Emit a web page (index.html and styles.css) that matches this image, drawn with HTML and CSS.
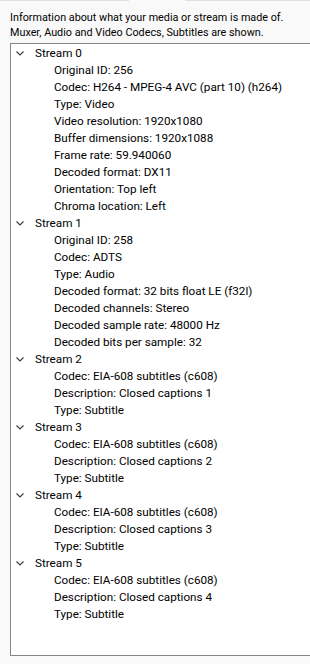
FILE: index.html
```html
<!DOCTYPE html>
<html lang="en">
<head>
    <meta charset="UTF-8">
    <title>Codec information</title>
    <link rel="stylesheet" href="styles.css">
</head>
<body>
    <div class="tabs-line">
        <div class="tabs-line__part tabs-line__part_left"></div>
        <div class="tabs-line__gap"></div>
        <div class="tabs-line__part"></div>
    </div>

    <p class="hint">Information about what your media or stream is made of.<br>Muxer, Audio and Video Codecs, Subtitles are shown.</p>

    <div class="tree">
        <div class="tree__node">
            <div class="tree__head"><svg class="tree__arrow" width="8" height="5" viewBox="0 0 8 5"><polyline points="0.5,0.5 4,4 7.5,0.5"/></svg>Stream 0</div>
            <div class="tree__item">Original ID: 256</div>
            <div class="tree__item">Codec: H264 - MPEG-4 AVC (part 10) (h264)</div>
            <div class="tree__item">Type: Video</div>
            <div class="tree__item">Video resolution: 1920x1080</div>
            <div class="tree__item">Buffer dimensions: 1920x1088</div>
            <div class="tree__item">Frame rate: 59.940060</div>
            <div class="tree__item">Decoded format: DX11</div>
            <div class="tree__item">Orientation: Top left</div>
            <div class="tree__item">Chroma location: Left</div>
        </div>
        <div class="tree__node">
            <div class="tree__head"><svg class="tree__arrow" width="8" height="5" viewBox="0 0 8 5"><polyline points="0.5,0.5 4,4 7.5,0.5"/></svg>Stream 1</div>
            <div class="tree__item">Original ID: 258</div>
            <div class="tree__item">Codec: ADTS</div>
            <div class="tree__item">Type: Audio</div>
            <div class="tree__item">Decoded format: 32 bits float LE (f32l)</div>
            <div class="tree__item">Decoded channels: Stereo</div>
            <div class="tree__item">Decoded sample rate: 48000 Hz</div>
            <div class="tree__item">Decoded bits per sample: 32</div>
        </div>
        <div class="tree__node">
            <div class="tree__head"><svg class="tree__arrow" width="8" height="5" viewBox="0 0 8 5"><polyline points="0.5,0.5 4,4 7.5,0.5"/></svg>Stream 2</div>
            <div class="tree__item">Codec: EIA-608 subtitles (c608)</div>
            <div class="tree__item">Description: Closed captions 1</div>
            <div class="tree__item">Type: Subtitle</div>
        </div>
        <div class="tree__node">
            <div class="tree__head"><svg class="tree__arrow" width="8" height="5" viewBox="0 0 8 5"><polyline points="0.5,0.5 4,4 7.5,0.5"/></svg>Stream 3</div>
            <div class="tree__item">Codec: EIA-608 subtitles (c608)</div>
            <div class="tree__item">Description: Closed captions 2</div>
            <div class="tree__item">Type: Subtitle</div>
        </div>
        <div class="tree__node">
            <div class="tree__head"><svg class="tree__arrow" width="8" height="5" viewBox="0 0 8 5"><polyline points="0.5,0.5 4,4 7.5,0.5"/></svg>Stream 4</div>
            <div class="tree__item">Codec: EIA-608 subtitles (c608)</div>
            <div class="tree__item">Description: Closed captions 3</div>
            <div class="tree__item">Type: Subtitle</div>
        </div>
        <div class="tree__node">
            <div class="tree__head"><svg class="tree__arrow" width="8" height="5" viewBox="0 0 8 5"><polyline points="0.5,0.5 4,4 7.5,0.5"/></svg>Stream 5</div>
            <div class="tree__item">Codec: EIA-608 subtitles (c608)</div>
            <div class="tree__item">Description: Closed captions 4</div>
            <div class="tree__item">Type: Subtitle</div>
        </div>
    </div>
</body>
</html>
```

FILE: styles.css
```css
html, body {
    margin: 0;
    height: 100%;
    overflow: hidden;
}
body {
    background-color: #f9f9f9;
    font-family: Roboto, sans-serif;
    color: #000;
}
.tabs-line {
    display: flex;
    height: 1px;
}
.tabs-line__part {
    flex: 1;
    background-color: #e0e0e0;
}
.tabs-line__part_left {
    flex: 0 0 129px;
}
.tabs-line__gap {
    flex: 0 0 56px;
}
.hint {
    margin: 9px 0 0 10px;
    font-size: 10.8px;
    line-height: 15px;
    white-space: nowrap;
}
.tree {
    box-sizing: border-box;
    margin: 3px -10px 0 10px;
    height: 613px;
    padding-top: 1px;
    border: 1px solid #828790;
    background-color: #fff;
    font-size: 11.7px;
}
.tree__head, .tree__item {
    height: 17px;
    line-height: 17px;
    white-space: nowrap;
}
.tree__head {
    display: flex;
    align-items: center;
}
.tree__arrow {
    margin: -1px 11px 0 5px;
    fill: none;
    stroke: #404040;
    stroke-width: 1.2;
}
.tree__item {
    padding-left: 43px;
}
```
